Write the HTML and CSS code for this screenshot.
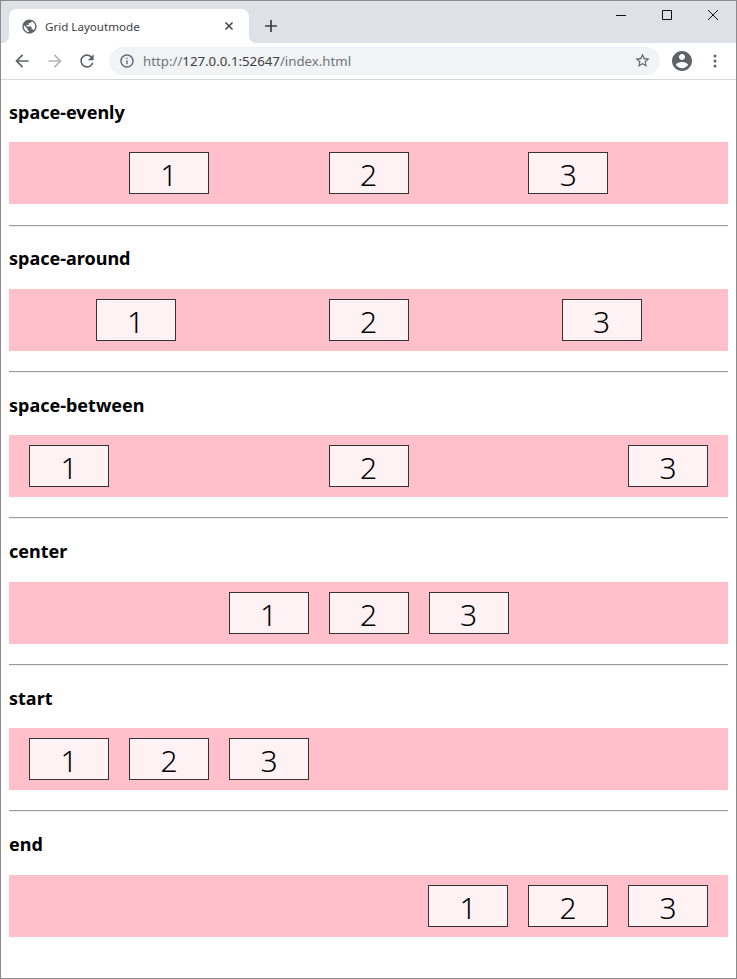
FILE: index.html
```html
<!DOCTYPE html>
<html lang="en">
<head>
    <meta charset="UTF-8">
    <meta name="viewport" content="width=device-width, initial-scale=1.0">
    <title>Grid Layoutmode</title>
    <link rel="stylesheet" href="styles.css">
</head>
<body>
    <div class="window">
        <div class="tab-strip">
            <div class="tab">
                <svg class="tab-icon" viewBox="0 0 24 24"><path d="M12 2C6.48 2 2 6.48 2 12s4.48 10 10 10 10-4.48 10-10S17.52 2 12 2zm-1 17.93c-3.95-.49-7-3.85-7-7.93 0-.62.08-1.21.21-1.79L9 15v1c0 1.1.9 2 2 2v1.93zm6.9-2.54c-.26-.81-1-1.39-1.9-1.39h-1v-3c0-.55-.45-1-1-1H8v-2h2c.55 0 1-.45 1-1V7h2c1.1 0 2-.9 2-2v-.41c2.93 1.19 5 4.06 5 7.41 0 2.08-.8 3.97-2.1 5.39z"/></svg>
                <span class="tab-title">Grid Layoutmode</span>
                <svg class="tab-close" viewBox="0 0 10 10"><path d="M1.5 1.5l7 7M8.5 1.5l-7 7"/></svg>
            </div>
            <svg class="new-tab" viewBox="0 0 12 12"><path d="M6 0v12M0 6h12"/></svg>
            <div class="window-controls">
                <svg viewBox="0 0 10 10"><path d="M0 5.5h10"/></svg>
                <svg viewBox="0 0 10 10"><path d="M.5.5h9v9h-9z"/></svg>
                <svg viewBox="0 0 10 10"><path d="M0 0l10 10M10 0L0 10"/></svg>
            </div>
        </div>

        <div class="toolbar">
            <svg class="tool-icon" viewBox="0 0 24 24"><path d="M20 11H7.83l5.59-5.59L12 4l-8 8 8 8 1.41-1.41L7.83 13H20v-2z"/></svg>
            <svg class="tool-icon disabled" viewBox="0 0 24 24"><path d="M4 11h12.17l-5.59-5.59L12 4l8 8-8 8-1.41-1.41L16.17 13H4v-2z"/></svg>
            <svg class="tool-icon reload" viewBox="0 0 24 24"><path d="M17.65 6.35A7.958 7.958 0 0012 4c-4.42 0-7.99 3.58-7.99 8s3.57 8 7.99 8c3.73 0 6.84-2.55 7.73-6h-2.08A5.99 5.99 0 0112 18c-3.31 0-6-2.69-6-6s2.69-6 6-6c1.66 0 3.14.69 4.22 1.78L13 11h7V4l-2.35 2.35z"/></svg>
            <div class="address-bar">
                <svg class="info-icon" viewBox="0 0 24 24"><path d="M11 7h2v2h-2zm0 4h2v6h-2zm1-9C6.48 2 2 6.48 2 12s4.48 10 10 10 10-4.48 10-10S17.52 2 12 2zm0 18c-4.41 0-8-3.59-8-8s3.59-8 8-8 8 3.59 8 8-3.59 8-8 8z"/></svg>
                <span class="url">http://<span class="url-host">127.0.0.1:52647</span>/index.html</span>
                <svg class="star-icon" viewBox="0 0 24 24"><path d="M22 9.24l-7.19-.62L12 2 9.19 8.63 2 9.24l5.46 4.73L5.82 21 12 17.27 18.18 21l-1.63-7.03L22 9.24zM12 15.4l-3.76 2.27 1-4.28-3.32-2.88 4.38-.38L12 6.1l1.71 4.04 4.38.38-3.32 2.88 1 4.28L12 15.4z"/></svg>
            </div>
            <svg class="account-icon" viewBox="0 0 24 24"><path d="M12 2C6.48 2 2 6.48 2 12s4.48 10 10 10 10-4.48 10-10S17.52 2 12 2zm0 3c1.66 0 3 1.34 3 3s-1.34 3-3 3-3-1.34-3-3 1.34-3 3-3zm0 14.2c-2.5 0-4.71-1.28-6-3.22.03-1.99 4-3.08 6-3.08 1.99 0 5.97 1.09 6 3.08-1.29 1.94-3.5 3.22-6 3.22z"/></svg>
            <svg class="menu-icon" viewBox="0 0 4 14"><circle cx="2" cy="2" r="1.5"/><circle cx="2" cy="7" r="1.5"/><circle cx="2" cy="12" r="1.5"/></svg>
        </div>

        <div class="page">
            <h3>space-evenly</h3>
            <div class="grid evenly">
                <div class="item">1</div>
                <div class="item">2</div>
                <div class="item">3</div>
            </div>
            <hr>
            <h3>space-around</h3>
            <div class="grid around">
                <div class="item">1</div>
                <div class="item">2</div>
                <div class="item">3</div>
            </div>
            <hr>
            <h3>space-between</h3>
            <div class="grid between">
                <div class="item">1</div>
                <div class="item">2</div>
                <div class="item">3</div>
            </div>
            <hr>
            <h3>center</h3>
            <div class="grid center">
                <div class="item">1</div>
                <div class="item">2</div>
                <div class="item">3</div>
            </div>
            <hr>
            <h3>start</h3>
            <div class="grid start">
                <div class="item">1</div>
                <div class="item">2</div>
                <div class="item">3</div>
            </div>
            <hr>
            <h3>end</h3>
            <div class="grid end">
                <div class="item">1</div>
                <div class="item">2</div>
                <div class="item">3</div>
            </div>
        </div>
    </div>
</body>
</html>
```

FILE: styles.css
```css
html, body {
    margin: 0;
    padding: 0;
}
body {
    font-family: "Noto Sans", "Open Sans", Arial, sans-serif;
    background: white;
}
.window {
    box-sizing: border-box;
    height: 979px;
    overflow: hidden;
    border: 1px solid #8b8b8b;
}

/* tab strip */
.tab-strip {
    display: flex;
    align-items: flex-end;
    height: 42px;
    padding-left: 8px;
    background: #dee1e6;
}
.tab {
    position: relative;
    display: flex;
    align-items: center;
    box-sizing: border-box;
    width: 240px;
    height: 34px;
    padding: 0 15px 0 12px;
    background: white;
    border-radius: 8px 8px 0 0;
}
.tab::before,
.tab::after {
    content: "";
    position: absolute;
    bottom: 0;
    width: 8px;
    height: 8px;
}
.tab::before {
    left: -8px;
    background: radial-gradient(circle at 0 0, transparent 8px, white 8.5px);
}
.tab::after {
    right: -8px;
    background: radial-gradient(circle at 100% 0, transparent 8px, white 8.5px);
}
.tab-icon {
    width: 17px;
    height: 17px;
    fill: #5f6368;
}
.tab-title {
    flex: 1;
    margin-left: 7px;
    font-size: 11.6px;
    color: #3c4043;
}
.tab-close {
    width: 10px;
    height: 10px;
    fill: none;
    stroke: #45484c;
    stroke-width: 1.6;
}
.new-tab {
    width: 12px;
    height: 12px;
    margin: 0 0 11px 16px;
    fill: none;
    stroke: #3c4043;
    stroke-width: 1.7;
}
.window-controls {
    display: flex;
    gap: 36px;
    align-self: flex-start;
    margin: 9px 18px 0 auto;
}
.window-controls svg {
    width: 10px;
    height: 10px;
    fill: none;
    stroke: #111;
    stroke-width: 1;
}

/* toolbar */
.toolbar {
    display: flex;
    align-items: center;
    box-sizing: border-box;
    height: 37px;
    padding: 0 0 1px 11px;
    background: white;
    border-bottom: 1px solid #d6d7d9;
}
.tool-icon {
    width: 20px;
    height: 20px;
    margin-right: 13px;
    fill: #5f6368;
}
.tool-icon.disabled {
    fill: #b4b6b9;
}
.tool-icon.reload {
    margin: 0 14px 0 -1px;
}
.address-bar {
    display: flex;
    align-items: center;
    box-sizing: border-box;
    width: 551px;
    height: 28px;
    margin-left: -2px;
    padding: 0 9px 0 10px;
    background: #f1f3f4;
    border-radius: 14px;
}
.info-icon {
    width: 16px;
    height: 16px;
    fill: #5f6368;
}
.url {
    flex: 1;
    margin-left: 8px;
    font-size: 13.25px;
    color: #70757a;
}
.url-host {
    color: #3c4043;
}
.star-icon {
    width: 17px;
    height: 17px;
    fill: #5f6368;
}
.account-icon {
    width: 24px;
    height: 24px;
    margin-left: 10px;
    fill: #5f6368;
}
.menu-icon {
    width: 4px;
    height: 14px;
    margin-left: 19px;
    fill: #5f6368;
}

/* page content */
.page {
    padding: 0.1px 8px 0;
}
h3 {
    margin: 18.72px 0;
    font-size: 18px;
    font-weight: bold;
    line-height: 26.76px;
    color: black;
}
.grid {
    display: grid;
    grid-template-columns: repeat(3, 80px);
    gap: 20px;
    margin-top: -2px;
    padding: 10px 20px;
    background: pink;
}
.item {
    box-sizing: border-box;
    height: 42px;
    border: 1px solid #333;
    background: #fff2f5;
    font-size: 30px;
    font-weight: 350;
    line-height: 44px;
    text-align: center;
    color: black;
}
hr {
    height: 2px;
    box-sizing: border-box;
    margin: 20.25px 0 0;
    border: none;
    border-top: 1px solid #999;
    border-bottom: 1px solid #eee;
}
.evenly { justify-content: space-evenly; }
.around { justify-content: space-around; }
.between { justify-content: space-between; }
.center { justify-content: center; }
.start { justify-content: start; }
.end { justify-content: end; }
```
